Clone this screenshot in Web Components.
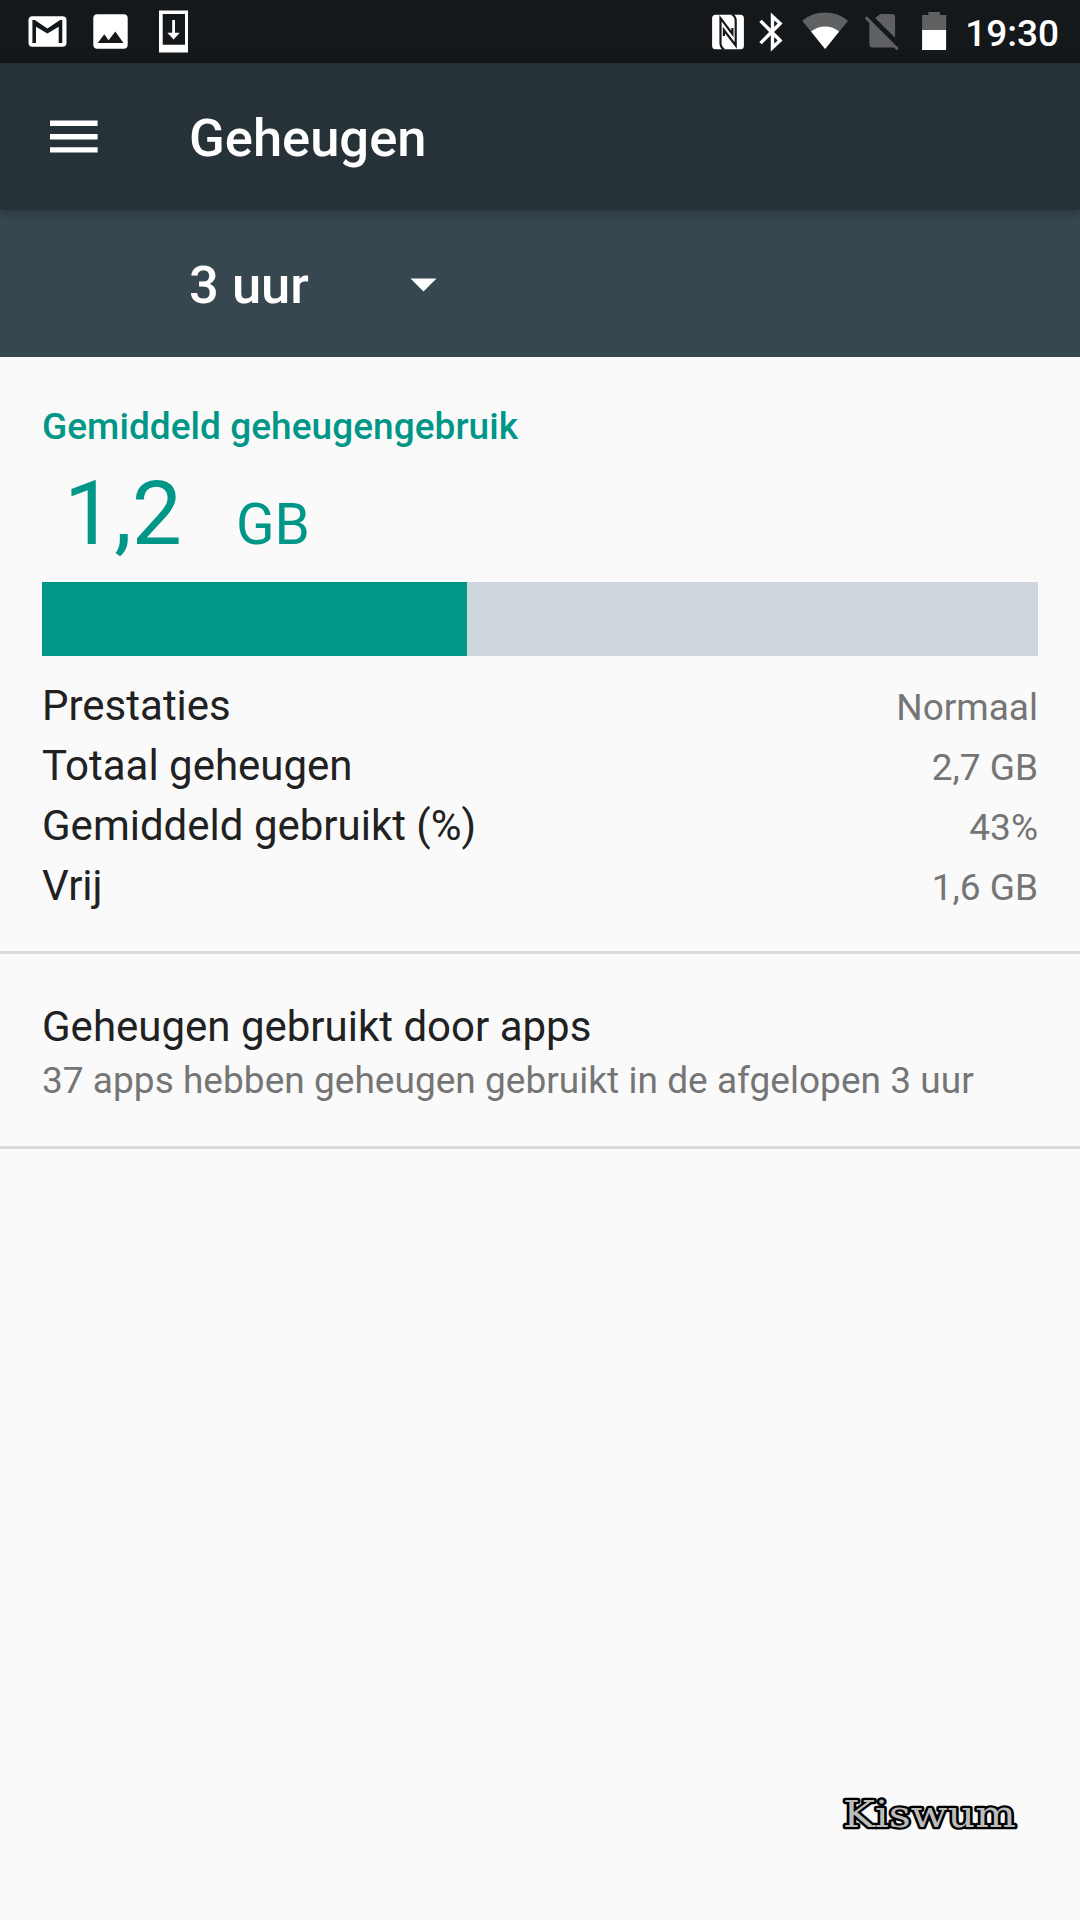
<!DOCTYPE html>
<html lang="nl">
<head>
<meta charset="utf-8">
<title>Geheugen</title>
<style>
  body{
    margin:0; min-height:1920px; background:#fafafa; color:#212121;
    font-family: Roboto, "Noto Sans", sans-serif;
    --accent:#009688;
    --secondary:#757575;
  }
</style>
</head>
<body>
<memory-screen></memory-screen>

<script>
class StatusBar extends HTMLElement{
  connectedCallback(){
    this.attachShadow({mode:'open'});
    this.shadowRoot.innerHTML = `
      <style>
        :host{ display:flex; justify-content:space-between; height:63px; background:#14181b; color:#fff }
        svg{ display:block }
        .right{ display:flex; padding-right:21px }
        .time{ font-size:37px; font-weight:500; line-height:67px }
      </style>
      <svg width="240" height="63" viewBox="0 0 240 63" fill="#fff">
        <rect x="28.5" y="16.2" width="38" height="30.5" rx="4"/>
        <path fill="#14181b" d="M32.4 43V20h2.4l12.6 8.4L60 20h2.3v23h-3.6V26.8L47.4 33.4 36 26.8V43z"/>
        <rect x="93.3" y="14.3" width="34.4" height="34.4" rx="4"/>
        <path fill="#14181b" d="M97.7 43l6.6-8.7 4.3 5.9 6.7-8.7 8.2 11.5z"/>
        <path fill-rule="evenodd" d="M159 10.5h29v42h-29zM162.7 14v30.7H185V14z"/>
        <path d="M172.2 20h2.8v12.8h4.8l-6.2 6.6-6.2-6.6h4.8z"/>
      </svg>
      <div class="right">
        <svg width="267" height="63" viewBox="697.9 0 267 63" fill="#fff">
          <rect x="712" y="14.8" width="31.8" height="34.4" rx="3.5"/>
          <g fill="none" stroke="#14181b" stroke-width="2.2">
            <path d="M724 49.6q-3.6-2-3.6-6.5V18.2L732.3 34V28"/>
            <path d="M731.8 14.4q3.8 2 3.8 6.5V45.5L723.8 30V36"/>
          </g>
          <path fill="none" stroke="#fff" stroke-width="3.4" d="M760.4 20.9l19.6 19.6-7.6 7V16.5l7.6 7-19.6 19.6"/>
          <path fill="#606163" d="M802 20.7a36 36 0 0 1 46 0L825 49z"/>
          <path d="M811 31.6a21.5 21.5 0 0 1 28 0L825 49z"/>
          <path fill="#606163" d="M880.5 14h11.2q3.3 0 3.3 3.3v20.5L875 18zM869.2 22l25.5 25.5H872.5q-3.3 0-3.3-3.3z"/>
          <path stroke="#606163" stroke-width="2.8" d="M865.6 17.3l32 32"/>
          <path fill="#606163" d="M922 30V15h6.3v-3h11.5v3h6.3v15z"/>
          <path d="M922 30h24v20h-24z"/>
        </svg>
        <span class="time"><slot></slot></span>
      </div>
    `;
  }
}
customElements.define('status-bar', StatusBar);

class AppToolbar extends HTMLElement{
  connectedCallback(){
    this.attachShadow({mode:'open'});
    this.shadowRoot.innerHTML = `
      <style>
        :host{
          display:flex; align-items:center; height:147px; box-sizing:border-box; padding-left:50px;
          background:#263238; color:#fff; position:relative; z-index:1;
          box-shadow:0 2px 10px rgba(0,0,0,.3);
        }
        svg{ display:block; margin-right:91px }
        h1{ margin:0; padding-top:3px; font-size:52.5px; font-weight:500; line-height:62px }
      </style>
      <svg width="48" height="33" viewBox="0 0 48 33" fill="#fff">
        <path d="M0 .5h47.6v5.4H0zM0 14h47.6v5.4H0zM0 27.2h47.6v5.4H0z"/>
      </svg>
      <h1><slot></slot></h1>
    `;
  }
}
customElements.define('app-toolbar', AppToolbar);

class DurationSpinner extends HTMLElement{
  connectedCallback(){
    this.attachShadow({mode:'open'});
    this.shadowRoot.innerHTML = `
      <style>
        :host{
          display:flex; align-items:center; height:147px; box-sizing:border-box; padding-left:189px;
          background:#37474f; color:#fff;
        }
        span{ width:221px; padding-top:3px; font-size:52.5px; font-weight:500; line-height:62px }
        svg{ display:block; margin-top:2px }
      </style>
      <span><slot></slot></span>
      <svg width="27" height="14" viewBox="0 0 27 14" fill="#fff"><path d="M.5.5h26l-13 13z"/></svg>
    `;
  }
}
customElements.define('duration-spinner', DurationSpinner);

class MemoryUsage extends HTMLElement{
  connectedCallback(){
    this.attachShadow({mode:'open'});
    this.shadowRoot.innerHTML = `
      <style>
        :host{ display:block; padding:48px 42px 35px; border-bottom:3px solid #dadada }
        h2{ margin:0; color:var(--accent); font-size:37px; font-weight:500; line-height:43px; letter-spacing:.05px }
        .amount{
          display:flex; align-items:baseline; gap:54px; height:104px; margin:14px 0 16px; padding-left:22px;
          color:var(--accent); font-size:89.25px; line-height:104px;
        }
        .unit{ font-size:56.7px }
        .bar{ height:74px; margin-bottom:20px; background:#cfd6dd }
        .fill{ width:425px; height:100%; background:var(--accent) }
      </style>
      <h2>${this.getAttribute('heading')}</h2>
      <div class="amount"><span>${this.getAttribute('amount')}</span><span class="unit">${this.getAttribute('unit')}</span></div>
      <div class="bar"><div class="fill"></div></div>
      <slot></slot>
    `;
  }
}
customElements.define('memory-usage', MemoryUsage);

class StatRow extends HTMLElement{
  connectedCallback(){
    this.attachShadow({mode:'open'});
    this.shadowRoot.innerHTML = `
      <style>
        :host{ display:flex; justify-content:space-between; align-items:baseline; height:60px; line-height:60px; font-size:42px }
        .label::first-letter{ letter-spacing:var(--initial-kern, 0) }
        .label{ display:block }
        .value{ color:var(--secondary); font-size:37px }
      </style>
      <span class="label">${this.getAttribute('label')}</span>
      <span class="value"><slot></slot></span>
    `;
  }
}
customElements.define('stat-row', StatRow);

class PreferenceItem extends HTMLElement{
  connectedCallback(){
    this.attachShadow({mode:'open'});
    this.shadowRoot.innerHTML = `
      <style>
        :host{ display:block; padding:48px 42px 44px; border-bottom:3px solid #dadada }
        .title{ font-size:42px; line-height:49px; margin-bottom:8px }
        .summary{ color:var(--secondary); font-size:37px; line-height:43px; letter-spacing:.03px }
      </style>
      <div class="title">${this.getAttribute('label')}</div>
      <div class="summary"><slot></slot></div>
    `;
  }
}
customElements.define('preference-item', PreferenceItem);

class WaterMark extends HTMLElement{
  connectedCallback(){
    this.attachShadow({mode:'open'});
    this.shadowRoot.innerHTML = `
      <style>
        :host{ display:block; margin:auto 60px 84px auto }
        svg{ display:block }
        text{
          font-family:"DejaVu Serif", serif; font-size:37px;
          fill:#bcbcbc; stroke:#000; stroke-width:4.6px; stroke-linejoin:round; paint-order:stroke;
        }
      </style>
      <svg width="180" height="44" viewBox="0 0 180 44">
        <text x="3" y="35" textLength="173" lengthAdjust="spacingAndGlyphs">${this.textContent}</text>
      </svg>
    `;
  }
}
customElements.define('water-mark', WaterMark);

class MemoryScreen extends HTMLElement{
  connectedCallback(){
    this.attachShadow({mode:'open'});
    this.shadowRoot.innerHTML = `
      <style>
        :host{ display:flex; flex-direction:column; width:1080px; height:1920px; overflow:hidden }
        .tight{ --initial-kern:-2px }
      </style>
      <status-bar>19:30</status-bar>
      <app-toolbar>Geheugen</app-toolbar>
      <duration-spinner>3 uur</duration-spinner>
      <memory-usage heading="Gemiddeld geheugengebruik" amount="1,2" unit="GB">
        <stat-row label="Prestaties">Normaal</stat-row>
        <stat-row class="tight" label="Totaal geheugen">2,7 GB</stat-row>
        <stat-row label="Gemiddeld gebruikt (%)">43%</stat-row>
        <stat-row label="Vrij">1,6 GB</stat-row>
      </memory-usage>
      <preference-item label="Geheugen gebruikt door apps">37 apps hebben geheugen gebruikt in de afgelopen 3 uur</preference-item>
      <water-mark>Kiswum</water-mark>
    `;
  }
}
customElements.define('memory-screen', MemoryScreen);
</script>
</body>
</html>
